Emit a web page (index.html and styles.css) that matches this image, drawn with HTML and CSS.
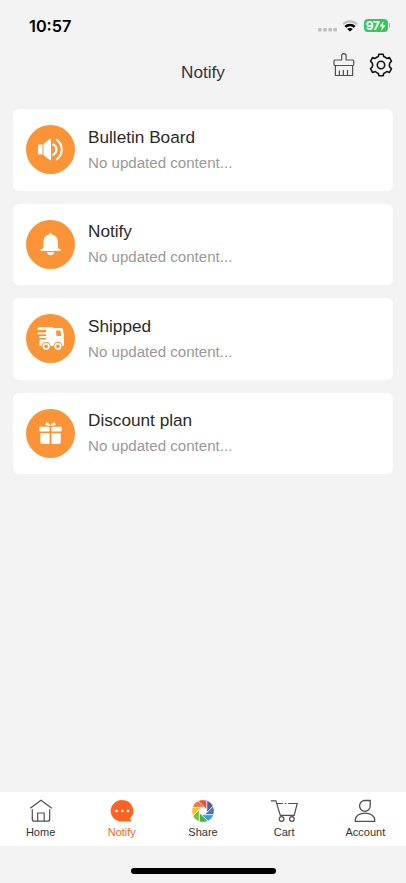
FILE: index.html
```
<!DOCTYPE html>
<html lang="en">
<head>
  <meta charset="UTF-8">
  <meta name="viewport" content="width=device-width, initial-scale=1">
  <title>Notify</title>
  <link rel="stylesheet" href="styles.css">
</head>
<body>
  <div class="status-bar">
    <span class="time">10:57</span>
    <div class="status-icons">
      <svg class="signal" width="20" height="4" viewBox="0 0 20 4" fill="#bdbdbd">
        <rect x="0" y="0" width="3.6" height="3.6" rx="1"/>
        <rect x="5.2" y="0" width="3.6" height="3.6" rx="1"/>
        <rect x="10.4" y="0" width="3.6" height="3.6" rx="1"/>
        <rect x="15.4" y="0" width="3.6" height="3.6" rx="1"/>
      </svg>
      <svg class="wifi" width="16" height="12" viewBox="0 0 16 12" fill="none">
        <path d="M1 4.2a10.1 10.1 0 0 1 14 0" stroke="#bdbdbd" stroke-width="2.1"/>
        <path d="M3.3 6.9a6.6 6.600 0 0 1 9.400 0" stroke="#000" stroke-width="2.5"/>
        <path d="M8 11.600 5.200 9.100a3.900 3.900 0 0 1 5.600 0z" fill="#000"/>
      </svg>
      <div class="battery">97<svg width="7" height="10" viewBox="0 0 7 10" fill="#fff"><path d="M4.7 0 .4 5.5h2.7L2.2 10l4.4-5.800H3.800z"/></svg></div>
    </div>
  </div>

  <header class="header">
    <h1>Notify</h1>
    <div class="header-actions">
      <svg width="22" height="24" viewBox="0 0 22 24" fill="none" stroke="#505050" stroke-width="1.2" stroke-linejoin="round">
        <path d="M8.700 7V2.800a2.200 2.200 0 0 1 4.400 0V7h6.700a1 1 0 0 1 1 1v3.500a1 1 0 0 1-1 1H2a1 1 0 0 1-1-1V8a1 1 0 0 1 1-1z"/>
        <path d="M2.400 12.500v10h17.200v-10M6.400 22v-4.500M10.400 22v-5M14.500 22v-5"/>
      </svg>
      <svg width="24" height="24" viewBox="-12 -12 24 24" fill="none" stroke="#151515" stroke-width="1.600" stroke-linejoin="round">
        <path d="M-2.200-10.700H2.200L2.700-8.400Q4.300-7.900 5.800-6.500L8.500-7.400 10.500-3.700 8.700-1.900Q8 0 8.700 1.900L10.500 3.700 8.500 7.400 5.800 6.500Q4.300 7.900 2.700 8.400L2.200 10.700H-2.200L-2.700 8.400Q-4.300 7.900-5.800 6.500L-8.500 7.400-10.500 3.700-8.700 1.900Q-8 0-8.700-1.900L-10.500-3.700-8.500-7.400-5.800-6.500Q-4.300-7.900-2.700-8.400z"/>
        <circle cx="0" cy="0" r="3.700"/>
      </svg>
    </div>
  </header>

  <main class="list">
    <div class="card">
      <div class="card-icon">
        <svg width="49" height="49" viewBox="0 0 49 49" fill="#fff">
          <path d="M12 20.600a1 1 0 0 1 1-1h3.500v10H13a1 1 0 0 1-1-1zM17.500 19l6.200-5q1.300-.8 1.300.8v19.400q0 1.600-1.300.8l-6.200-5z"/>
          <path d="M27.200 19.500c4.300 1.700 4.300 8.500 0 10.200M30.800 14.900c6.600 4.800 6.600 14.600 0 19.400" fill="none" stroke="#fff" stroke-width="2" stroke-linecap="round"/>
        </svg>
      </div>
      <div class="card-text">
        <h2>Bulletin Board</h2>
        <p>No updated content...</p>
      </div>
    </div>

    <div class="card">
      <div class="card-icon">
        <svg width="49" height="49" viewBox="0 0 49 49" fill="#fff">
          <path d="M22.900 14.800a1.700 1.700 0 0 1 3.400 0c3.600.7 5.500 3.300 5.500 6.700v5.200c0 1.200.7 1.800 1.500 2.400h.6a.9.9 0 0 1 0 2H15.400a.9.9 0 0 1 0-2h.6c.8-.6 1.500-1.200 1.500-2.400v-5.200c0-3.400 1.900-6 5.400-6.700z"/>
          <path d="M20.800 32.200h7.500c-.8 4-6.700 4-7.500 0z"/>
        </svg>
      </div>
      <div class="card-text">
        <h2>Notify</h2>
        <p>No updated content...</p>
      </div>
    </div>

    <div class="card">
      <div class="card-icon">
        <svg width="49" height="49" viewBox="0 0 49 49" fill="#fff">
          <path d="M12.200 13.300h15.300V14H35q1.400 0 1.900 1.300l1.100 6.700V31q0 1.100-1.200 1.100H14.700q-1.200 0-1.200-1.200v-5.600H20V14H12.200a1.200 1.200 0 0 1 0-.7z"/>
          <path d="M12.500 15H22M12.500 19.400H22M14 23H22" stroke="#fff" stroke-width="2" stroke-linecap="round"/>
          <path d="M12 17.200h8.500M12 21.200h8.500M13 24.800h7.500" stroke="#fb9436" stroke-width="1"/>
          <path d="M30.200 16.500h3.300q.8 0 1 .8l.9 4.700h-3.800q-1.400 0-1.400-1.300z" fill="#fb9436"/>
          <circle cx="20.100" cy="32.300" r="4.500" fill="#fb9436"/>
          <circle cx="31.900" cy="32.300" r="4.500" fill="#fb9436"/>
          <g fill="none" stroke="#fff" stroke-width="1.700">
            <circle cx="20.100" cy="32.300" r="2.700"/>
            <circle cx="31.900" cy="32.300" r="2.700"/>
          </g>
        </svg>
      </div>
      <div class="card-text">
        <h2>Shipped</h2>
        <p>No updated content...</p>
      </div>
    </div>

    <div class="card">
      <div class="card-icon">
        <svg width="49" height="49" viewBox="0 0 49 49" fill="#fff">
          <path d="M24.500 16.700c-2.200 0-4.200-.2-5.300-.7l1.200-2.700c1.700.3 3.200 1.500 4.100 3.400.9-1.900 2.400-3.100 4.100-3.400l1.200 2.700c-1.100.5-3.100.7-5.300.7z"/>
          <rect x="13.400" y="17.700" width="10.200" height="4.800" rx=".8"/>
          <rect x="25.500" y="17.700" width="10.100" height="4.800" rx=".8"/>
          <path d="M14.400 24.300h9.200V35h-7.200q-2 0-2-2zM25.500 24.300h9.200V33q0 2-2 2h-7.200z"/>
        </svg>
      </div>
      <div class="card-text">
        <h2>Discount plan</h2>
        <p>No updated content...</p>
      </div>
    </div>
  </main>

  <nav class="tab-bar">
    <a class="tab">
      <svg width="28" height="24" viewBox="0 0 28 24" fill="none" stroke="#505050" stroke-width="1.200">
        <path d="M3.200 9.300 14 1.300l10.800 8M5.300 10.300v9.900q0 2 2 2h13.400q2 0 2-2v-9.900M10.700 22v-8h6.500v8"/>
      </svg>
      <span>Home</span>
    </a>
    <a class="tab active">
      <svg width="28" height="24" viewBox="0 0 28 24">
        <path d="M14 1a11.300 10.900 0 0 1 8.500 18.100q-.6.900.4 2l.3.800q0 .7-1 .7H14A11.300 10.800 0 0 1 14 1z" fill="#fb6423"/>
        <g fill="#fff"><circle cx="8.500" cy="12" r="1.300"/><circle cx="14.200" cy="12" r="1.300"/><circle cx="20" cy="12" r="1.300"/></g>
      </svg>
      <span>Notify</span>
    </a>
    <a class="tab">
      <svg width="28" height="24" viewBox="-14 -12 28 24" stroke="#fff" stroke-width=".6">
        <defs><path id="blade" d="M3.700-10.700A11.300 11.300 0 0 1 10.200-4.900L3.700 1.530z"/></defs>
        <use href="#blade" fill="#5558a8"/>
        <use href="#blade" fill="#4a78bd" transform="rotate(45)"/>
        <use href="#blade" fill="#3aa0dc" transform="rotate(90)"/>
        <use href="#blade" fill="#4fb04c" transform="rotate(135)"/>
        <use href="#blade" fill="#82bd3c" transform="rotate(180)"/>
        <use href="#blade" fill="#fbc52c" transform="rotate(225)"/>
        <use href="#blade" fill="#f5772e" transform="rotate(270)"/>
        <use href="#blade" fill="#e9514f" transform="rotate(315)"/>
      </svg>
      <span>Share</span>
    </a>
    <a class="tab">
      <svg width="28" height="24" viewBox="0 0 28 24" fill="none" stroke="#505050" stroke-width="1.200">
        <path d="M.8 1.800h5.100l4.400 14.600h13.900l3-11.900h-9M16.500 4.500h-1.800M13 4.500H6.900"/>
        <circle cx="11.600" cy="20" r="2.300"/>
        <circle cx="21.900" cy="20" r="2.300"/>
      </svg>
      <span>Cart</span>
    </a>
    <a class="tab">
      <svg width="28" height="24" viewBox="0 0 28 24" fill="none" stroke="#505050" stroke-width="1.300">
        <path d="M14 1.500h5.200v5.400A5.300 5.400 0 1 1 14 1.500zM4.300 22.400v-1.600c0-3.800 4.300-6.600 9.700-6.600s9.700 2.800 9.700 6.600v1.600z"/>
      </svg>
      <span>Account</span>
    </a>
  </nav>
  <div class="home-area"><div class="home-indicator"></div></div>
</body>
</html>
```
FILE: styles.css
```
* {
  box-sizing: border-box;
}

body {
  margin: 0;
  height: 883px;
  display: flex;
  flex-direction: column;
  overflow: hidden;
  background: #f3f3f3;
  color: #2a2a2a;
  font-family: "Liberation Sans", Arial, sans-serif;
}

h1, h2, p {
  margin: 0;
  font-weight: normal;
}

svg {
  display: block;
}

.status-bar {
  display: flex;
  justify-content: space-between;
  height: 48px;
  padding: 15.5px 16px 0 29px;
}

.time {
  font-family: Inter, sans-serif;
  font-size: 16.3px;
  font-weight: 600;
  line-height: 20px;
  color: #000;
}

.status-icons {
  display: flex;
  align-items: flex-start;
  padding-top: 3.5px;
}

.signal {
  margin: 9px 4px 0 0;
}

.wifi {
  margin-top: 1px;
  margin-right: 6px;
}

.battery {
  position: relative;
  display: flex;
  align-items: center;
  justify-content: center;
  width: 24px;
  height: 13px;
  margin-right: 2px;
  border-radius: 4px;
  background: #35c759;
  color: #fff;
  font: bold 12px Inter, sans-serif;
  letter-spacing: -0.4px;
}

.battery::after {
  content: "";
  position: absolute;
  right: -2px;
  top: 4px;
  width: 1px;
  height: 5px;
  border-radius: 0 2px 2px 0;
  background: #aaa;
}

.header {
  position: relative;
  height: 61px;
  text-align: center;
}

.header h1 {
  padding-top: 14px;
  font-size: 17.2px;
  line-height: 20px;
  color: #333;
}

.header-actions {
  position: absolute;
  top: 5px;
  right: 13px;
  display: flex;
  gap: 14px;
}

.list {
  flex: 1;
  padding: 0 13px;
}

.card {
  display: flex;
  align-items: center;
  height: 81.5px;
  margin-bottom: 13px;
  padding: 0 13px;
  border-radius: 6px;
  background: #fff;
}

.card-icon {
  width: 49px;
  height: 49px;
  margin-right: 13px;
  border-radius: 50%;
  background: #fb9436;
}

.card-text h2 {
  margin-bottom: 6px;
  font-size: 17.2px;
  line-height: 20px;
}

.card-text p {
  font-size: 15.1px;
  line-height: 20px;
  color: #999;
}

.tab-bar {
  display: flex;
  height: 54px;
  background: #fff;
}

.tab {
  flex: 1;
  display: flex;
  flex-direction: column;
  align-items: center;
  padding-top: 7px;
  color: #333;
  font-size: 11px;
  line-height: 13px;
}

.tab span {
  margin-top: 3px;
}

.tab.active {
  color: #fb6423;
}

.home-area {
  height: 37px;
  padding-top: 22px;
}

.home-indicator {
  width: 145px;
  height: 6px;
  margin: 0 auto;
  border-radius: 3px;
  background: #000;
}
```
